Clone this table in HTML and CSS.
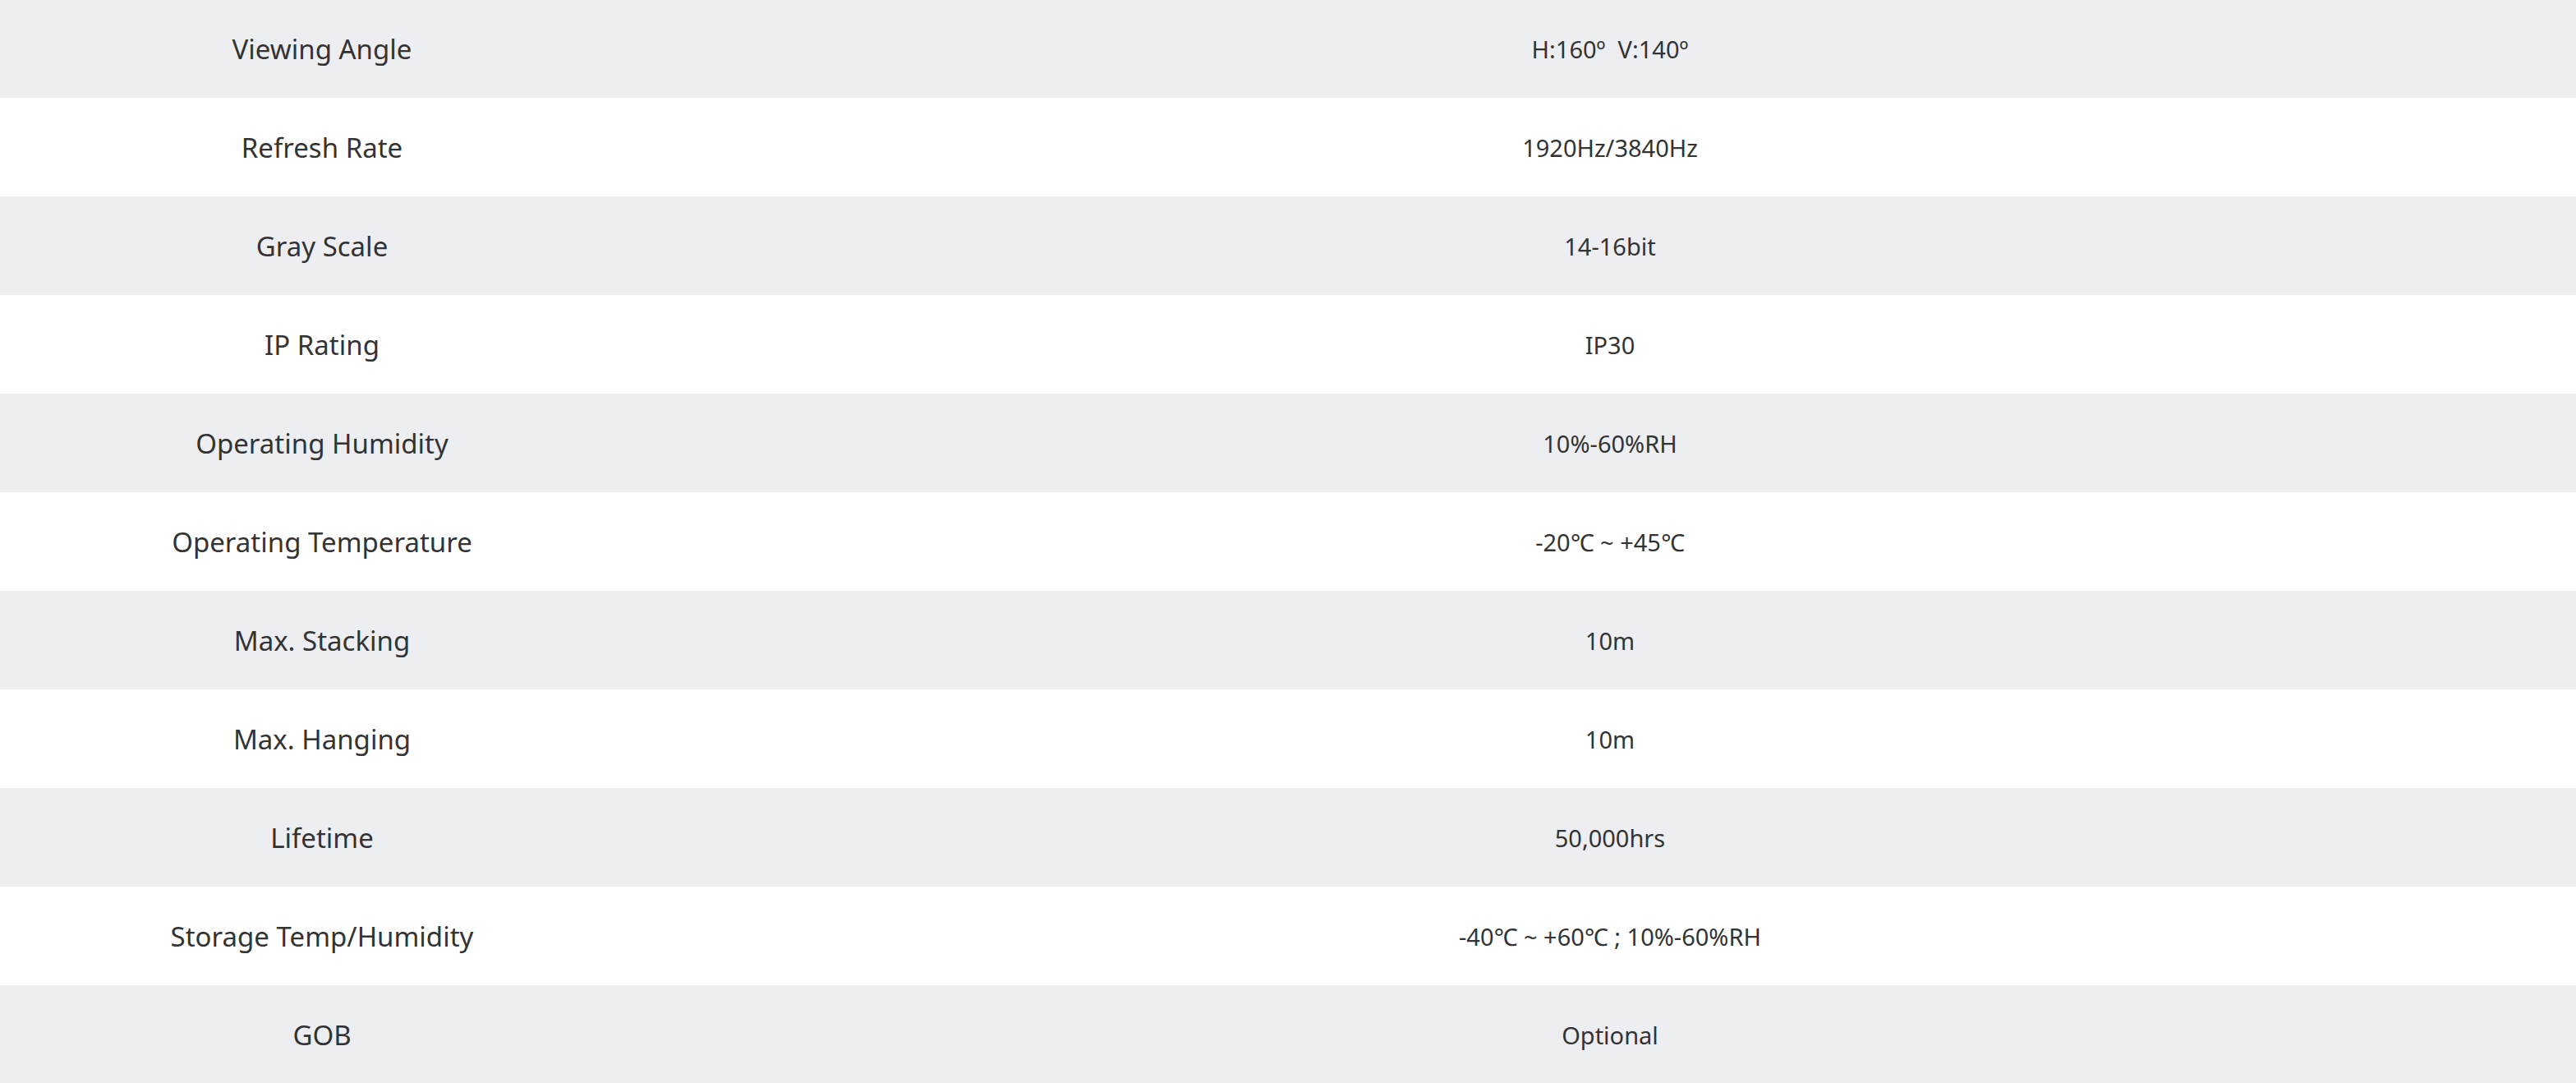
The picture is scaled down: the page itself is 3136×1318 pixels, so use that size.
FILE: index.html
```html
<!DOCTYPE html>
<html lang="en">
<head>
<meta charset="utf-8">
<title>Specifications</title>
<link rel="stylesheet" href="styles.css">
</head>
<body>
<div class="spec">
  <div class="row"><div class="label">Viewing Angle</div><div class="value">H:160º&nbsp; V:140º</div></div>
  <div class="row"><div class="label">Refresh Rate</div><div class="value">1920Hz/3840Hz</div></div>
  <div class="row"><div class="label">Gray Scale</div><div class="value">14-16bit</div></div>
  <div class="row"><div class="label">IP Rating</div><div class="value">IP30</div></div>
  <div class="row"><div class="label">Operating Humidity</div><div class="value">10%-60%RH</div></div>
  <div class="row"><div class="label">Operating Temperature</div><div class="value">-20℃ ~ +45℃</div></div>
  <div class="row"><div class="label">Max. Stacking</div><div class="value">10m</div></div>
  <div class="row"><div class="label">Max. Hanging</div><div class="value">10m</div></div>
  <div class="row"><div class="label">Lifetime</div><div class="value">50,000hrs</div></div>
  <div class="row"><div class="label">Storage Temp/Humidity</div><div class="value">-40℃ ~ +60℃ ; 10%-60%RH</div></div>
  <div class="row"><div class="label">GOB</div><div class="value">Optional</div></div>
</div>
</body>
</html>
```
FILE: styles.css
```css
html, body {
  margin: 0;
  padding: 0;
  background: #ffffff;
}
body {
  font-family: "Noto Sans", "Open Sans", sans-serif;
  color: #333333;
  overflow: hidden;
}
.spec {
  margin-top: -1px;
  display: flex;
  flex-direction: column;
}
.row {
  display: grid;
  grid-template-columns: 25% 75%;
  height: 120px;
  align-items: center;
  text-align: center;
}
.row:nth-child(odd) {
  background: #edeef2;
}
.label {
  font-size: 33px;
}
.value {
  font-size: 29px;
}
```
